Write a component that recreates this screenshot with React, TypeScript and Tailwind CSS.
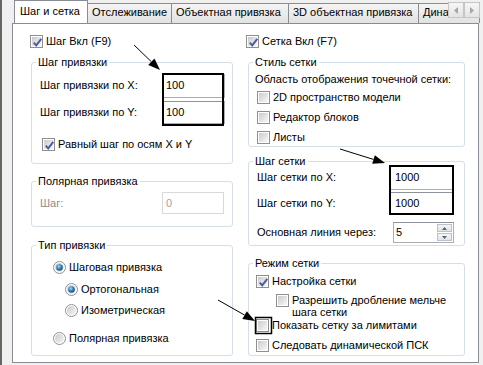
import React, { useId } from 'react';

function CheckBox({ checked }: { checked?: boolean }) {
  return (
    <span className="relative flex h-[13px] w-[13px] shrink-0 items-center justify-center border border-[#8e8f8f] bg-white">
      <span className="h-[9px] w-[9px] bg-linear-to-br from-[#cbcbcb] to-[#f8f8f8]" />
      {checked && (
        <svg className="absolute left-[1px] top-[1px]" width="11" height="11" viewBox="0 0 11 11">
          <path d="M1.8 5.6 L4.2 8.4 L9.3 1.8" fill="none" stroke="#4b5ea6" strokeWidth="2" />
        </svg>
      )}
    </span>
  );
}

function Radio({ checked }: { checked?: boolean }) {
  const id = useId().replace(/:/g, '');
  return (
    <svg width="13" height="13" viewBox="0 0 13 13" className="shrink-0">
      <defs>
        <linearGradient id={`g${id}`} x1="0" y1="0" x2="1" y2="1">
          <stop offset="0" stopColor="#c9c9c9" />
          <stop offset="1" stopColor="#f7f7f7" />
        </linearGradient>
        <radialGradient id={`b${id}`} cx="0.4" cy="0.35" r="0.7">
          <stop offset="0" stopColor="#9fdcf7" />
          <stop offset="0.5" stopColor="#2f86bf" />
          <stop offset="1" stopColor="#15466e" />
        </radialGradient>
      </defs>
      <circle cx="6.5" cy="6.5" r="6" fill="#fff" stroke="#8e8f8f" />
      <circle cx="6.5" cy="6.5" r="4.5" fill={`url(#g${id})`} />
      {checked && <circle cx="6.5" cy="6.5" r="3.3" fill={`url(#b${id})`} />}
    </svg>
  );
}

function Group({
  title,
  className,
  children,
}: {
  title: string;
  className: string;
  children: React.ReactNode;
}) {
  return (
    <div className={`rounded-[3px] border border-[#d5dfe5] ${className}`}>
      <div className="-mt-[7px] ml-[4px] w-fit bg-white px-[2px]">{title}</div>
      {children}
    </div>
  );
}

function TextBox({ value, className }: { value: string; className: string }) {
  return (
    <div
      className={`flex items-center border border-[#abadb3] border-t-[#8d939c] bg-white pl-[2px] ${className}`}
    >
      {value}
    </div>
  );
}

function Arrow({ x1, y1, x2, y2 }: { x1: number; y1: number; x2: number; y2: number }) {
  const dx = x2 - x1;
  const dy = y2 - y1;
  const len = Math.hypot(dx, dy);
  const ux = dx / len;
  const uy = dy / len;
  const bx = x2 - ux * 12;
  const by = y2 - uy * 12;
  const px = -uy * 4.5;
  const py = ux * 4.5;
  return (
    <g>
      <line x1={x1} y1={y1} x2={bx} y2={by} stroke="#000" strokeWidth="1" />
      <polygon points={`${x2},${y2} ${bx + px},${by + py} ${bx - px},${by - py}`} fill="#000" />
    </g>
  );
}

// the last tab is cut off by the scroll buttons
const tabs = [
  { label: 'Отслеживание', w: 'w-[85px]' },
  { label: 'Объектная привязка', w: 'w-[118px]' },
  { label: '3D объектная привязка', w: 'w-[131px]' },
  { label: 'Дина', w: 'w-[62px]' },
];

export default function App() {
  return (
    <div className="relative h-[365px] w-[483px] overflow-hidden bg-[#f0f0f0] pl-[12px] font-['Liberation_Sans',Arial,sans-serif] text-[11px] leading-[13px] text-black shadow-[inset_2px_0_0_#666]">
      {/* tabs */}
      <div className="flex h-[23px] items-end overflow-hidden whitespace-nowrap pl-[2px]">
        <div className="relative z-10 -mb-px h-[24px] w-[74px] shrink-0 border border-b-0 border-[#898c95] bg-white pl-[5px] pt-[4px]">
          Шаг и сетка
        </div>
        {tabs.map((t) => (
          <div
            key={t.label}
            className={`-ml-px h-[20px] shrink-0 overflow-hidden border border-b-0 border-[#898c95] bg-linear-to-b from-[#f4f4f4] to-[#e2e2e2] pl-[4px] pt-[2px] ${t.w}`}
          >
            {t.label}
          </div>
        ))}
      </div>
      <div className="absolute right-[3px] top-[2px] z-20 flex">
        <div className="flex h-[16px] w-[16px] items-center justify-center border border-[#c5c5c5] bg-linear-to-b from-[#f7f7f7] to-[#e3e3e3]">
          <svg width="4" height="7" viewBox="0 0 4 7">
            <polygon points="4,0 0,3.5 4,7" fill="#a5a5a5" />
          </svg>
        </div>
        <div className="flex h-[16px] w-[16px] items-center justify-center border border-[#c5c5c5] bg-linear-to-b from-[#f7f7f7] to-[#e3e3e3]">
          <svg width="4" height="7" viewBox="0 0 4 7">
            <polygon points="0,0 4,3.5 0,7" fill="#a5a5a5" />
          </svg>
        </div>
      </div>

      {/* panel */}
      <div className="flex h-[340px] w-[467px] gap-[13px] border border-[#898c95] bg-white pl-[17px] pt-[11px]">
        {/* left column */}
        <div className="flex w-[203px] flex-col">
          <label className="flex h-[13px] items-center gap-[3px]">
            <CheckBox checked />
            Шаг Вкл (F9)
          </label>

          <Group title="Шаг привязки" className="ml-[1px] mt-[14px] h-[102px]">
            <div className="mt-[5px] flex h-[23px] items-center justify-between pl-[8px] pr-[7px]">
              <span>Шаг привязки по X:</span>
              <TextBox value="100" className="h-[24px] w-[62px]" />
            </div>
            <div className="mt-[4px] flex h-[23px] items-center justify-between pl-[8px] pr-[7px]">
              <span>Шаг привязки по Y:</span>
              <TextBox value="100" className="h-[23px] w-[62px]" />
            </div>
            <label className="mt-[14px] flex h-[13px] items-center gap-[3px] pl-[10px]">
              <CheckBox checked />
              Равный шаг по осям X и Y
            </label>
          </Group>

          <Group title="Полярная привязка" className="ml-[1px] mt-[17px] h-[46px] text-black">
            <div className="mt-[4px] flex h-[22px] items-center justify-between pl-[8px] pr-[8px]">
              <span className="text-[#8d8d8d]">Шаг:</span>
              <div className="flex h-[22px] w-[62px] items-center border border-[#d9d9d9] bg-white pl-[3px] text-[#a3a3a3]">
                0
              </div>
            </div>
          </Group>

          <Group title="Тип привязки" className="ml-[1px] mt-[18px] h-[111px]">
            <label className="mt-[9px] flex h-[13px] items-center gap-[3px] pl-[21px]">
              <Radio checked />
              Шаговая привязка
            </label>
            <label className="mt-[9px] flex h-[13px] items-center gap-[3px] pl-[33px]">
              <Radio checked />
              Ортогональная
            </label>
            <label className="mt-[8px] flex h-[13px] items-center gap-[3px] pl-[33px]">
              <Radio />
              Изометрическая
            </label>
            <label className="mt-[15px] flex h-[13px] items-center gap-[3px] pl-[21px]">
              <Radio />
              Полярная привязка
            </label>
          </Group>
        </div>

        {/* right column */}
        <div className="flex w-[219px] flex-col">
          <label className="flex h-[13px] items-center gap-[3px]">
            <CheckBox checked />
            Сетка Вкл (F7)
          </label>

          <Group title="Стиль сетки" className="ml-[2px] mt-[14px] h-[85px] w-[217px]">
            <div className="mt-[4px] pl-[6px]">Область отображения точечной сетки:</div>
            <label className="mt-[5px] flex h-[13px] items-center gap-[3px] pl-[8px]">
              <CheckBox />
              2D пространство модели
            </label>
            <label className="mt-[7px] flex h-[13px] items-center gap-[3px] pl-[8px]">
              <CheckBox />
              Редактор блоков
            </label>
            <label className="mt-[7px] flex h-[13px] items-center gap-[3px] pl-[8px]">
              <CheckBox />
              Листы
            </label>
          </Group>

          <Group title="Шаг сетки" className="ml-[2px] mt-[14px] h-[85px] w-[217px]">
            <div className="-mt-[2px] flex h-[23px] items-center justify-between pl-[8px] pr-[10px]">
              <span>Шаг сетки по X:</span>
              <TextBox value="1000" className="h-[24px] w-[64px] pl-[4px]" />
            </div>
            <div className="mt-[3px] flex h-[23px] items-center justify-between pl-[8px] pr-[10px]">
              <span>Шаг сетки по Y:</span>
              <TextBox value="1000" className="h-[23px] w-[64px] pl-[4px]" />
            </div>
            <div className="mt-[7px] flex h-[21px] items-center justify-between pl-[8px] pr-[10px]">
              <span>Основная линия через:</span>
              <div className="flex h-[21px] w-[61px] items-stretch border border-[#abadb3] border-t-[#8d939c] bg-white">
                <span className="flex flex-1 items-center pl-[2px]">5</span>
                <div className="flex w-[16px] flex-col gap-px py-px pr-px">
                  <div className="flex flex-1 items-center justify-center border border-[#b9c1cc] bg-linear-to-b from-[#f6f6f6] to-[#dfe3e8]">
                    <svg width="5" height="3" viewBox="0 0 5 3">
                      <polygon points="0,3 2.5,0 5,3" fill="#5a6270" />
                    </svg>
                  </div>
                  <div className="flex flex-1 items-center justify-center border border-[#b9c1cc] bg-linear-to-b from-[#f6f6f6] to-[#dfe3e8]">
                    <svg width="5" height="3" viewBox="0 0 5 3">
                      <polygon points="0,0 5,0 2.5,3" fill="#5a6270" />
                    </svg>
                  </div>
                </div>
              </div>
            </div>
          </Group>

          <Group title="Режим сетки" className="ml-[2px] mt-[17px] h-[93px] w-[217px]">
            <label className="mt-[5px] flex h-[13px] items-center gap-[3px] pl-[7px]">
              <CheckBox checked />
              Настройка сетки
            </label>
            <label className="mt-[6px] flex items-start gap-[3px] pl-[27px] leading-[12px]">
              <CheckBox />
              <span>
                Разрешить дробление мельче
                <br />
                шага сетки
              </span>
            </label>
            <label className="mt-[1px] flex h-[13px] items-center gap-[3px] pl-[7px]">
              <CheckBox />
              Показать сетку за лимитами
            </label>
            <label className="mt-[7px] flex h-[13px] items-center gap-[3px] pl-[7px]">
              <CheckBox />
              Следовать динамической ПСК
            </label>
          </Group>
        </div>
      </div>

      {/* annotations */}
      <svg className="pointer-events-none absolute left-0 top-0 z-30" width="483" height="365">
        <rect x="163" y="74" width="60" height="51" fill="none" stroke="#000" strokeWidth="2" />
        <rect x="390" y="166" width="63" height="48" fill="none" stroke="#000" strokeWidth="2" />
        <rect x="255.5" y="317.5" width="16" height="16" fill="none" stroke="#000" strokeWidth="1.5" />
        <Arrow x1={134} y1={45} x2={160} y2={70} />
        <Arrow x1={340} y1={149} x2={385} y2={163} />
        <Arrow x1={218} y1={300} x2={255} y2={321} />
      </svg>
    </div>
  );
}
